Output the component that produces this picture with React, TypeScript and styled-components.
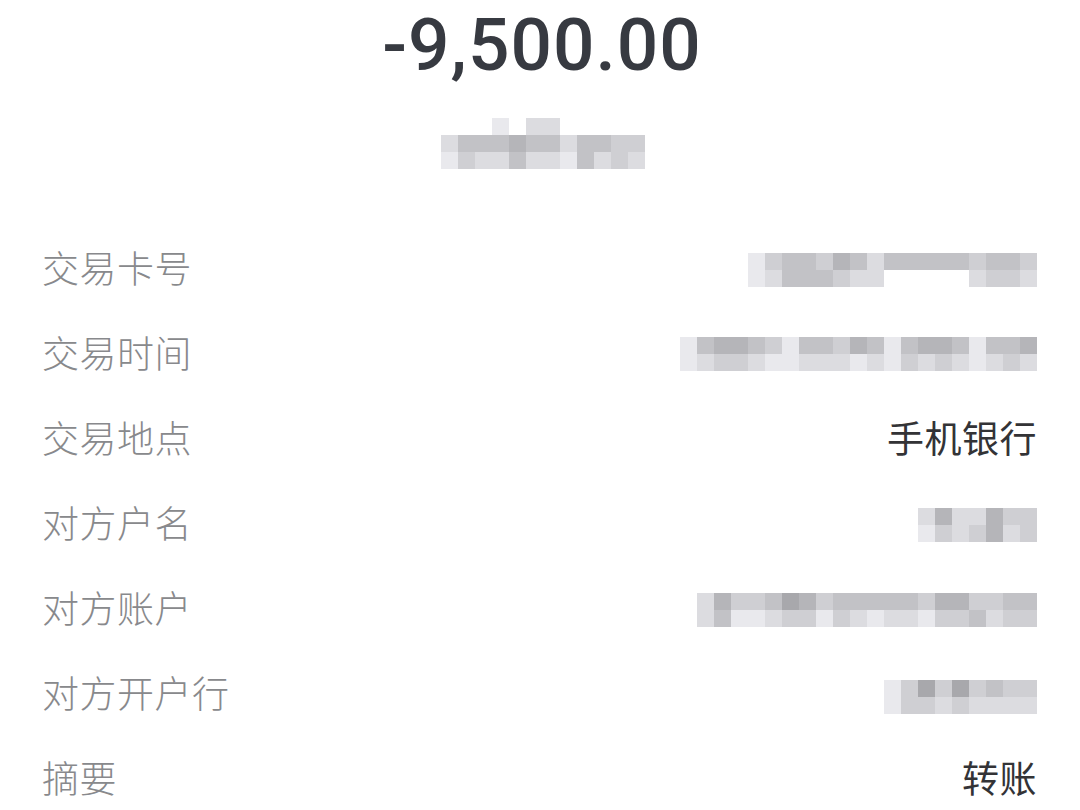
import React from "react";
import styled, { createGlobalStyle } from "styled-components";

const GlobalStyle = createGlobalStyle`
  html, body {
    margin: 0;
    padding: 0;
    background: #ffffff;
  }
  body {
    font-family: "Noto Sans CJK SC", "Noto Sans", sans-serif;
  }
`;

const Page = styled.div`
  width: 1080px;
  height: 810px;
  overflow: hidden;
  background: #ffffff;
  display: flex;
  flex-direction: column;
`;

const Header = styled.div`
  display: flex;
  flex-direction: column;
  align-items: center;
  padding-top: 5px;
`;

const Amount = styled.div`
  font-family: "Roboto", "DejaVu Sans", sans-serif;
  font-size: 73px;
  line-height: 80px;
  font-weight: 500;
  color: #373a41;
  letter-spacing: 1px;
  margin-left: 4px;
`;

const SubLine = styled.div`
  margin-top: 33px;
  margin-left: 6px;
`;

const List = styled.div`
  margin-top: 56px;
  padding: 0 43px 0 42px;
  display: flex;
  flex-direction: column;
`;

const Row = styled.div`
  height: 85px;
  display: flex;
  align-items: center;
  justify-content: space-between;
`;

const Label = styled.span`
  font-size: 37px;
  line-height: 1;
  font-weight: 300;
  color: #88898c;
  letter-spacing: 0.5px;
`;

const Value = styled.span`
  font-size: 37px;
  line-height: 1;
  color: #333336;
  letter-spacing: 0.5px;
`;

// pixelated (masked) value: each char is one cell, "0"-"9" darker as it grows, "." is blank
const MosaicGrid = styled.div<{ $cols: number; $offset: number }>`
  display: grid;
  grid-template-columns: repeat(${(p) => p.$cols}, 17px);
  grid-auto-rows: 17px;
  margin-top: ${(p) => p.$offset}px;
`;

const Cell = styled.div<{ $shade: string }>`
  background: ${(p) => p.$shade};
`;

const shadeOf = (c: string) => {
  if (c === ".") return "transparent";
  const n = parseInt(c, 10);
  const v = 246 - n * 13;
  const b = Math.min(255, v + 4);
  return `rgb(${v}, ${v}, ${b})`;
};

const Mosaic: React.FC<{ rows: string[]; offset?: number }> = ({ rows, offset = 0 }) => (
  <MosaicGrid $cols={rows[0].length} $offset={offset}>
    {rows.map((r, i) =>
      r.split("").map((c, j) => <Cell key={`${i}-${j}`} $shade={shadeOf(c)} />)
    )}
  </MosaicGrid>
);

const subtitle = [
  "...1.22.....",
  "244454424433",
  "132242214232",
];

type Item = { label: string; value?: string; mosaic?: string[]; offset?: number };

const items: Item[] = [
  { label: "交易卡号", mosaic: ["13443542444443443", "12444322.....2332"], offset: 4 },
  { label: "交易时间", mosaic: ["145543144354145541445", "123321122212132321232"], offset: 2 },
  { label: "交易地点", value: "手机银行" },
  { label: "对方户名", mosaic: ["2522533", "1323523"], offset: 4 },
  { label: "对方账户", mosaic: ["25334653444443553344", "24112331321221334233"], offset: 4 },
  { label: "对方开户行", mosaic: ["136363433", "133232222"], offset: 8 },
  { label: "摘要", value: "转账" },
];

export default function App() {
  return (
    <Page>
      <GlobalStyle />
      <Header>
        <Amount>-9,500.00</Amount>
        <SubLine>
          <Mosaic rows={subtitle} />
        </SubLine>
      </Header>
      <List>
        {items.map((item) => (
          <Row key={item.label}>
            <Label>{item.label}</Label>
            {item.value ? (
              <Value>{item.value}</Value>
            ) : (
              <Mosaic rows={item.mosaic!} offset={item.offset} />
            )}
          </Row>
        ))}
      </List>
    </Page>
  );
}
